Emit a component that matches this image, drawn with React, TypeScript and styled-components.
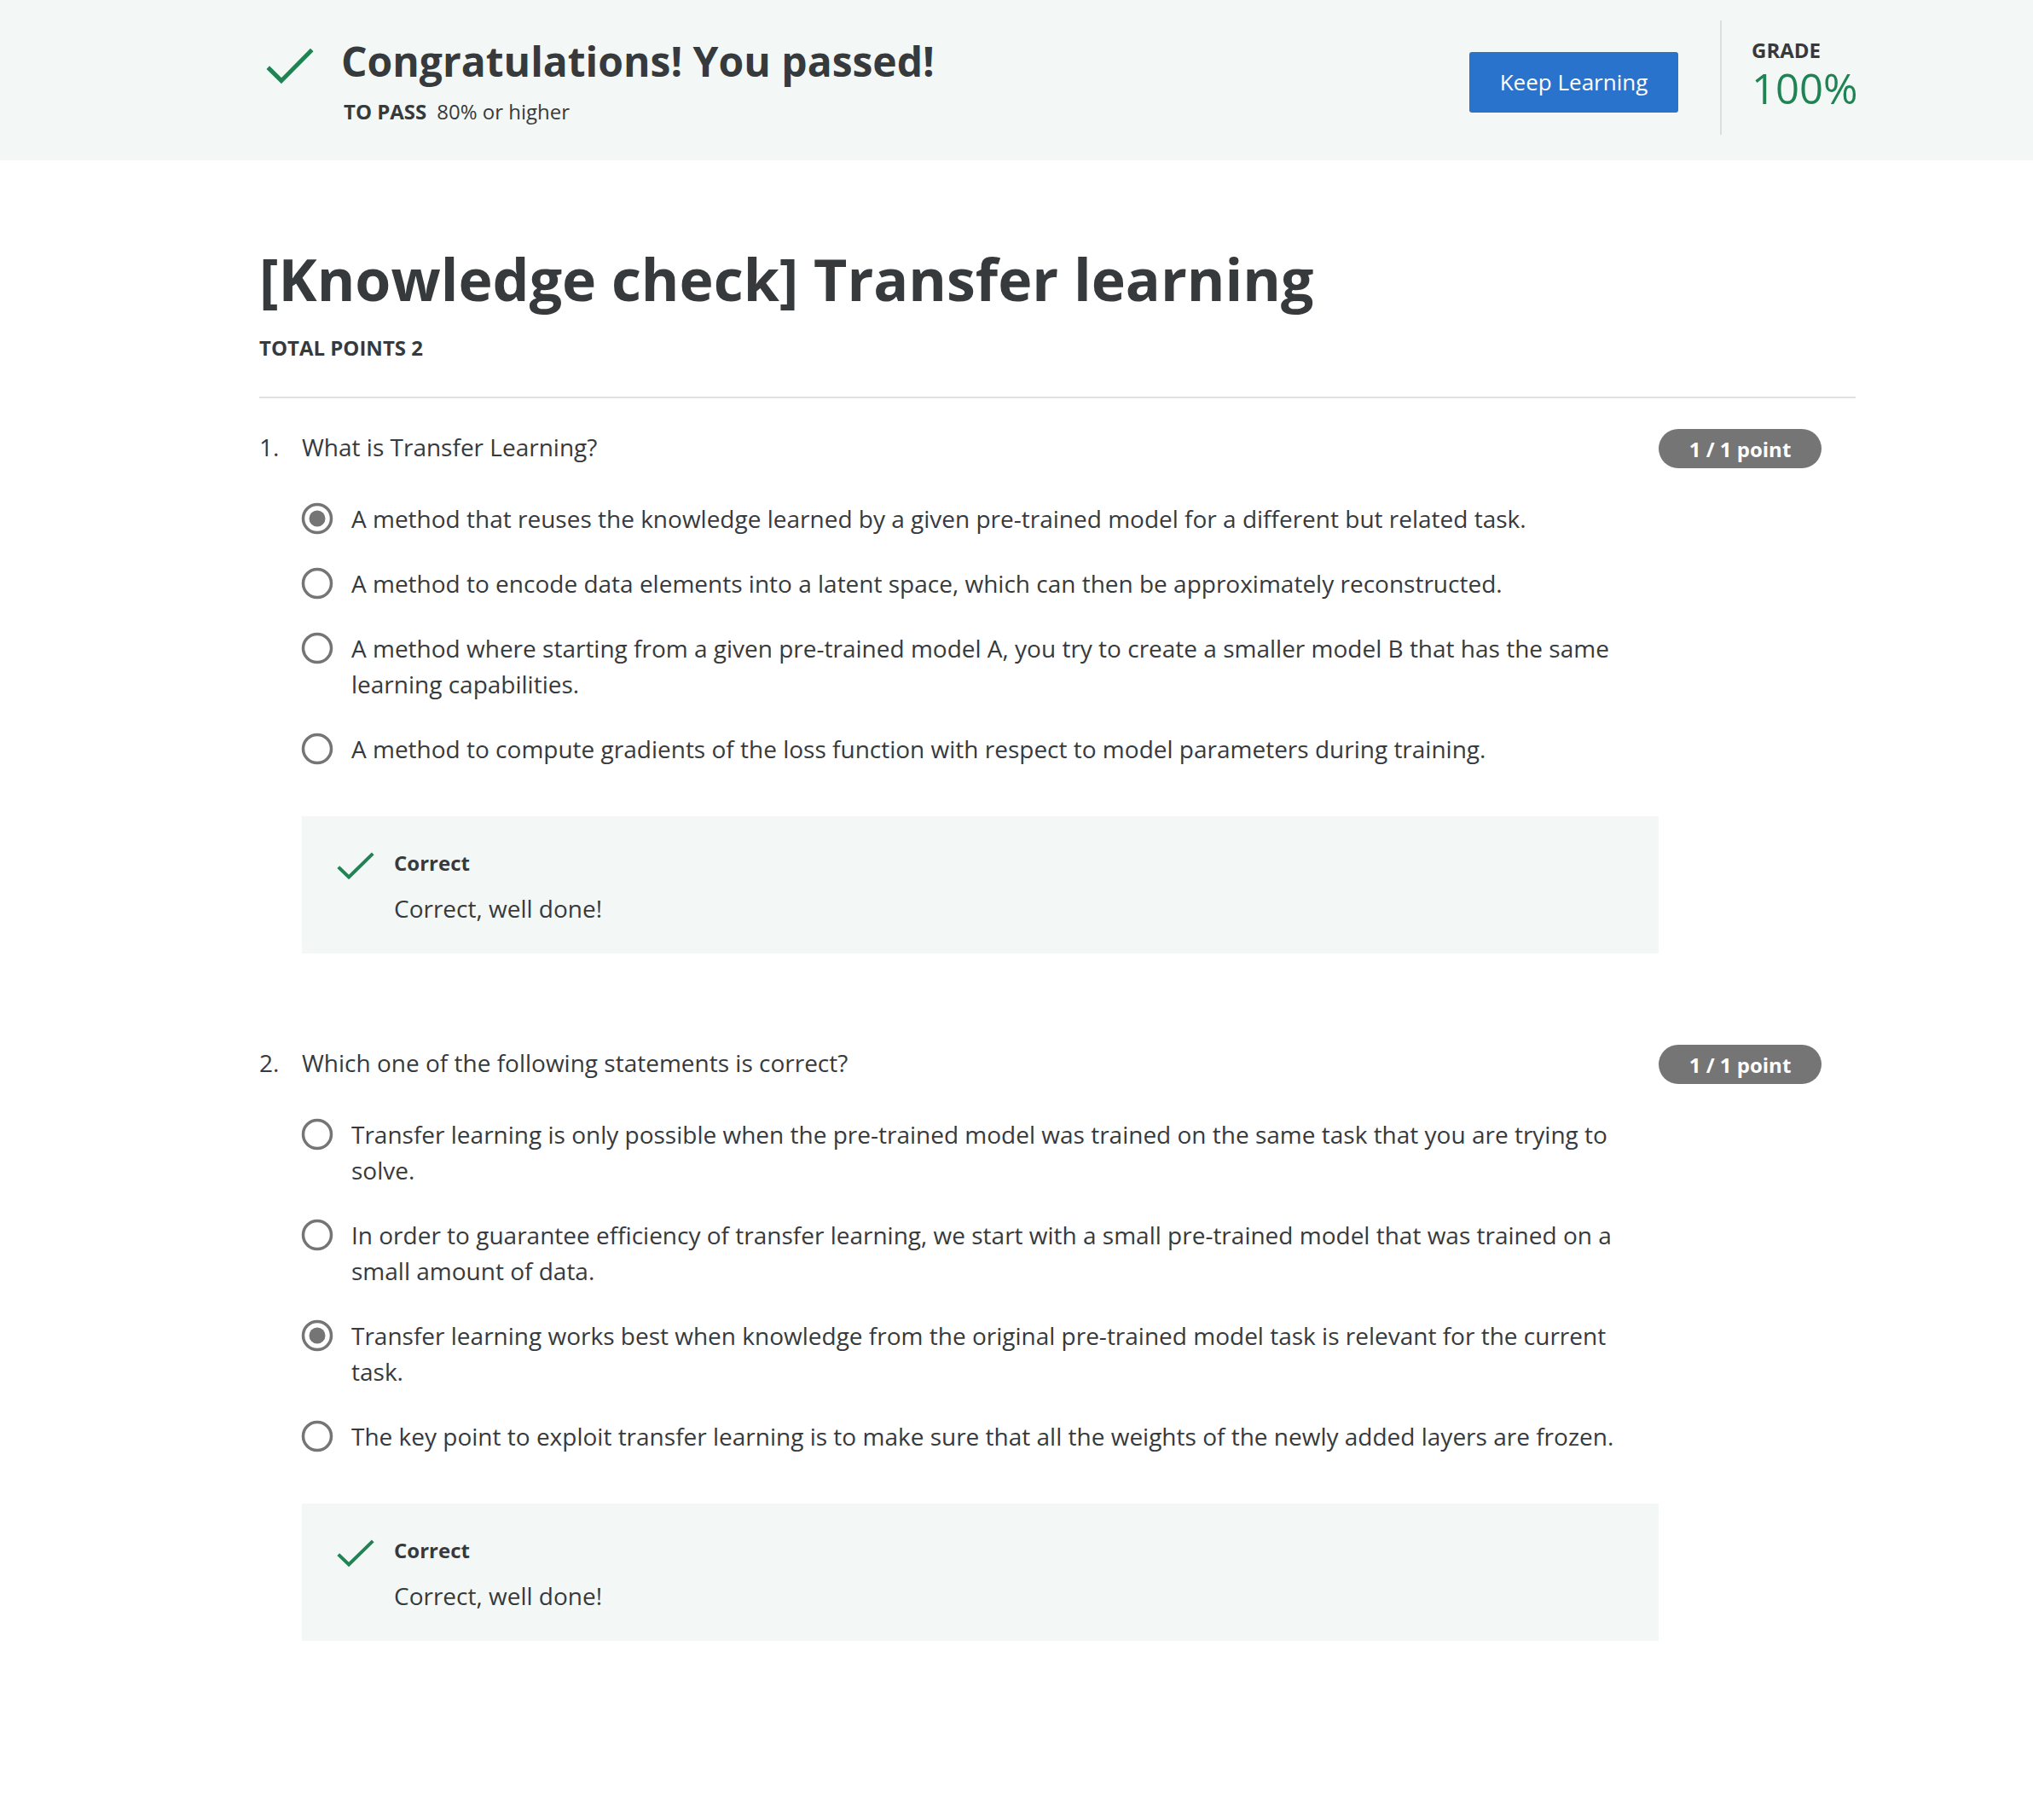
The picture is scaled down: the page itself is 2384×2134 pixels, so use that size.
import React from "react";
import styled, { createGlobalStyle } from "styled-components";

const Global = createGlobalStyle`
  html, body { margin: 0; padding: 0; background: #ffffff; }
  body { font-family: "Open Sans", "Noto Sans", sans-serif; color: #373a3c; }
  * { box-sizing: border-box; }
`;

const Header = styled.header`
  height: 188px;
  background: #f3f8f6;
  display: flex;
  align-items: center;
  justify-content: space-between;
  padding: 0 208px 0 312px;
`;

const HeaderLeft = styled.div`
  display: flex;
  align-items: flex-start;
  gap: 32px;
`;

const HeaderIcon = styled.div`
  width: 56px;
  height: 42px;
  margin-top: 14px;
  display: flex;
`;

const HeaderText = styled.div`
  display: flex;
  flex-direction: column;
  gap: 12px;
`;

const PassTitle = styled.h2`
  margin: 0;
  font-size: 48px;
  line-height: 60px;
  font-weight: 700;
  color: #373a3c;
`;

const PassLine = styled.div`
  font-size: 24px;
  line-height: 32px;
  display: flex;
  gap: 12px;
  padding-left: 3px;
  margin-top: 1px;
`;

const PassLabel = styled.span`
  font-weight: 700;
`;

const HeaderRight = styled.div`
  display: flex;
  align-items: center;
  height: 134px;
  margin-top: -6px;
`;

const KeepButton = styled.button`
  width: 245px;
  height: 71px;
  margin-top: 10px;
  border: none;
  border-radius: 3px;
  background: #2a73cc;
  color: #ffffff;
  font-family: "Open Sans", sans-serif;
  font-size: 26px;
  cursor: pointer;
`;

const VDivider = styled.div`
  width: 2px;
  align-self: stretch;
  background: #dddddd;
  margin: 0 35px 0 49px;
`;

const GradeBlock = styled.div`
  display: flex;
  flex-direction: column;
  width: 122px;
  margin-top: -6px;
`;

const GradeLabel = styled.div`
  font-size: 24px;
  line-height: 30px;
  font-weight: 700;
`;

const GradeValue = styled.div`
  font-size: 49px;
  line-height: 58px;
  font-weight: 400;
  color: #1f8354;
  white-space: nowrap;
`;

const Main = styled.main`
  margin-left: 304px;
  width: 1872px;
  padding-top: 96px;
  padding-bottom: 120px;
`;

const Title = styled.h1`
  margin: 0;
  font-size: 68px;
  line-height: 86px;
  font-weight: 700;
  color: #373a3c;
`;

const TotalPoints = styled.div`
  margin-top: 23px;
  font-size: 24px;
  line-height: 30px;
  font-weight: 700;
`;

const Separator = styled.hr`
  margin: 42px 0 0;
  border: none;
  height: 2px;
  background: #e1e1e1;
`;

const QuestionList = styled.div`
  display: flex;
  flex-direction: column;
  gap: 107px;
  margin-top: 36px;
`;

const Question = styled.section`
  display: grid;
  grid-template-columns: 50px 1591px 191px;
`;

const QNumber = styled.div`
  font-size: 28px;
  line-height: 42px;
`;

const QBody = styled.div`
  display: flex;
  flex-direction: column;
`;

const QText = styled.div`
  font-size: 28px;
  line-height: 42px;
`;

const Badge = styled.div`
  height: 46px;
  border-radius: 23px;
  background: #757575;
  color: #ffffff;
  font-size: 24px;
  font-weight: 700;
  display: flex;
  align-items: center;
  justify-content: center;
`;

const Options = styled.div`
  display: flex;
  flex-direction: column;
  gap: 34px;
  margin-top: 42px;
`;

const Option = styled.label`
  display: flex;
  align-items: flex-start;
  gap: 21px;
  margin-left: -1px;
`;

const RadioBox = styled.span`
  flex: 0 0 38px;
  height: 38px;
  margin-top: 2px;
  display: flex;
`;

const OptionText = styled.span`
  font-size: 28px;
  line-height: 42px;
`;

const Feedback = styled.div`
  margin-top: 58px;
  background: #f3f8f6;
  padding: 40px 40px 32px 41px;
  display: flex;
  gap: 23px;
`;

const FeedbackIcon = styled.div`
  width: 44px;
  height: 32px;
  margin-top: 2px;
  display: flex;
`;

const FeedbackText = styled.div`
  display: flex;
  flex-direction: column;
  gap: 17px;
`;

const FeedbackLabel = styled.div`
  font-size: 24px;
  line-height: 30px;
  font-weight: 700;
`;

const FeedbackMessage = styled.div`
  font-size: 28px;
  line-height: 42px;
`;

const Check: React.FC<{ w: number; h: number; sw: number }> = ({ w, h, sw }) => (
  <svg width={w} height={h} viewBox={`0 0 ${w} ${h}`} fill="none">
    <polyline
      points={`${w * 0.04},${h * 0.55} ${w * 0.32},${h * 0.92} ${w * 0.96},${h * 0.06}`}
      stroke="#1f8354"
      strokeWidth={sw}
    />
  </svg>
);

const Radio: React.FC<{ checked?: boolean }> = ({ checked }) => (
  <svg width="38" height="38" viewBox="0 0 38 38">
    <circle cx="19" cy="19" r="16.5" fill="none" stroke="#757575" strokeWidth="3.5" />
    {checked && <circle cx="19" cy="19" r="9.5" fill="#757575" />}
  </svg>
);

type Q = { n: number; text: string; options: string[]; selected: number };

const questions: Q[] = [
  {
    n: 1,
    text: "What is Transfer Learning?",
    selected: 0,
    options: [
      "A method that reuses the knowledge learned by a given pre-trained model for a different but related task.",
      "A method to encode data elements into a latent space, which can then be approximately reconstructed.",
      "A method where starting from a given pre-trained model A, you try to create a smaller model B that has the same learning capabilities.",
      "A method to compute gradients of the loss function with respect to model parameters during training.",
    ],
  },
  {
    n: 2,
    text: "Which one of the following statements is correct?",
    selected: 2,
    options: [
      "Transfer learning is only possible when the pre-trained model was trained on the same task that you are trying to solve.",
      "In order to guarantee efficiency of transfer learning, we start with a small pre-trained model that was trained on a small amount of data.",
      "Transfer learning works best when knowledge from the original pre-trained model task is relevant for the current task.",
      "The key point to exploit transfer learning is to make sure that all the weights of the newly added layers are frozen.",
    ],
  },
];

export default function App() {
  return (
    <>
      <Global />
      <Header>
        <HeaderLeft>
          <HeaderIcon>
            <Check w={56} h={42} sw={5} />
          </HeaderIcon>
          <HeaderText>
            <PassTitle>Congratulations! You passed!</PassTitle>
            <PassLine>
              <PassLabel>TO PASS</PassLabel>
              <span>80% or higher</span>
            </PassLine>
          </HeaderText>
        </HeaderLeft>
        <HeaderRight>
          <KeepButton>Keep Learning</KeepButton>
          <VDivider />
          <GradeBlock>
            <GradeLabel>GRADE</GradeLabel>
            <GradeValue>100%</GradeValue>
          </GradeBlock>
        </HeaderRight>
      </Header>
      <Main>
        <Title>[Knowledge check] Transfer learning</Title>
        <TotalPoints>TOTAL POINTS 2</TotalPoints>
        <Separator />
        <QuestionList>
          {questions.map((q) => (
            <Question key={q.n}>
              <QNumber>{q.n}.</QNumber>
              <QBody>
                <QText>{q.text}</QText>
                <Options>
                  {q.options.map((o, i) => (
                    <Option key={i}>
                      <RadioBox>
                        <Radio checked={i === q.selected} />
                      </RadioBox>
                      <OptionText>{o}</OptionText>
                    </Option>
                  ))}
                </Options>
                <Feedback>
                  <FeedbackIcon>
                    <Check w={44} h={32} sw={4} />
                  </FeedbackIcon>
                  <FeedbackText>
                    <FeedbackLabel>Correct</FeedbackLabel>
                    <FeedbackMessage>Correct, well done!</FeedbackMessage>
                  </FeedbackText>
                </Feedback>
              </QBody>
              <Badge>1 / 1 point</Badge>
            </Question>
          ))}
        </QuestionList>
      </Main>
    </>
  );
}
